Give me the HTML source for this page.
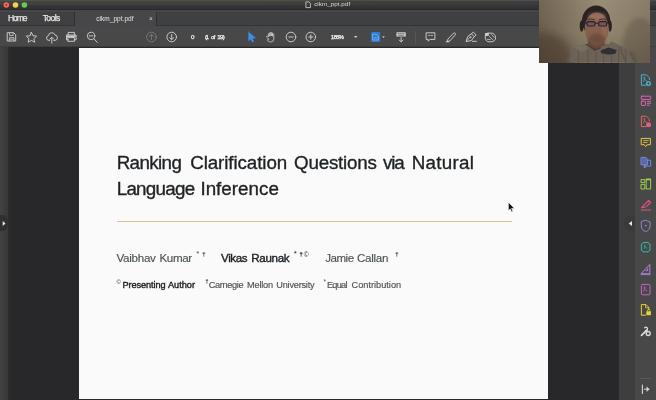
<!DOCTYPE html>
<html><head><meta charset="utf-8"><title>cikm_ppt.pdf</title>
<style>
html,body{margin:0;padding:0;background:#28272a;}
body{width:656px;height:400px;overflow:hidden;position:relative;font-family:"Liberation Sans",sans-serif;}
.abs{position:absolute;}
#titlebar{left:0;top:0;width:656px;height:10px;background:linear-gradient(90deg,rgba(90,110,50,0.13) 0,rgba(90,110,50,0.11) 40%,rgba(90,110,50,0) 58%) 0 0/656px 5px no-repeat,linear-gradient(#525251 0,#484847 1px,#3d3d3d 1.6px,#3b3b3b 5px,#343335 5.8px,#323133 8.5px,#272628 9.2px,#272628 10px);}
#tabbar{left:0;top:10px;width:656px;height:17px;background:#474749;}
#hometools{left:0;top:12px;width:74.5px;height:14px;background:#3f4042;border-right:1px solid #2f2f31;border-bottom:1px solid #343436;box-sizing:border-box;}
#tab{left:79px;top:10px;width:76px;height:17px;background:#474749;}
#tabrest{left:155.5px;top:12px;width:501px;height:14px;background:#3f4042;border-left:1px solid #2f2f31;border-bottom:1px solid #353537;box-sizing:border-box;}
#toolbar{left:0;top:27px;width:656px;height:20px;background:#484849;border-bottom:1px solid #3c3c3d;box-sizing:border-box;}
#content{left:0;top:47px;width:656px;height:353px;background:#28272a;}
#lstrip{left:0;top:47px;width:11px;height:353px;background:linear-gradient(90deg,#424242 0,#393939 7.5px,#2d2d2d 8.2px,#2a2a2a 11px);}
#lbtn{left:0;top:215px;width:8px;height:16px;background:#303030;border-radius:0 6px 6px 0;}
#page{left:79px;top:48px;width:469px;height:351px;background:#fafafa;}
#rstrip{left:619px;top:47px;width:16px;height:353px;background:#3e3e3e;}
#rbtn{left:624px;top:215px;width:11px;height:16px;background:#393939;border-radius:8px 0 0 8px;}
#rbar{left:635px;top:47px;width:21px;height:353px;background:#484848;}
#cam{left:539px;top:0;width:111px;height:63px;overflow:hidden;background:#8a7e6f;}
#rule{left:116.5px;top:220.6px;width:395px;height:1px;background:#e2bf8f;}
.w{position:absolute;white-space:nowrap;line-height:1;}
svg{position:absolute;left:0;top:0;}
</style></head><body>
<div class="abs" id="titlebar"></div>
<div class="abs" id="tabbar"></div>
<div class="abs" id="hometools"></div>
<div class="abs" id="tab"></div>
<div class="abs" id="tabrest"></div>
<div class="abs" id="toolbar"></div>
<div class="abs" id="content"></div>
<div class="abs" id="lstrip"></div>
<div class="abs" id="lbtn"></div>
<div class="abs" id="page"></div>
<div class="abs" id="rstrip"></div>
<div class="abs" id="rbtn"></div>
<div class="abs" id="rbar"></div>
<div class="abs" id="rule"></div>
<div id="pagetext" style="will-change:transform;position:absolute;left:0;top:0;width:656px;height:400px;">
<span class="w" style="left:116.70px;top:152.00px;font-size:18.8px;line-height:21px;color:#1e2225;-webkit-text-stroke:0.35px #1e2225;letter-spacing:-0.627px;">Ranking</span>
<span class="w" style="left:190.20px;top:152.00px;font-size:18.8px;line-height:21px;color:#1e2225;-webkit-text-stroke:0.35px #1e2225;letter-spacing:-0.089px;">Clarification</span>
<span class="w" style="left:294.10px;top:152.00px;font-size:18.8px;line-height:21px;color:#1e2225;-webkit-text-stroke:0.35px #1e2225;letter-spacing:-0.221px;">Questions</span>
<span class="w" style="left:383.00px;top:152.00px;font-size:18.8px;line-height:21px;color:#1e2225;-webkit-text-stroke:0.35px #1e2225;letter-spacing:-1.182px;">via</span>
<span class="w" style="left:411.80px;top:152.00px;font-size:18.8px;line-height:21px;color:#1e2225;-webkit-text-stroke:0.35px #1e2225;letter-spacing:0.255px;">Natural</span>
<span class="w" style="left:116.70px;top:178.00px;font-size:18.8px;line-height:21px;color:#1e2225;-webkit-text-stroke:0.35px #1e2225;letter-spacing:-0.731px;">Language</span>
<span class="w" style="left:200.40px;top:178.00px;font-size:18.8px;line-height:21px;color:#1e2225;-webkit-text-stroke:0.35px #1e2225;letter-spacing:0.017px;">Inference</span>
<span class="w" style="left:116.40px;top:252.00px;font-size:11.6px;line-height:12px;color:#4c5154;-webkit-text-stroke:0.15px #4c5154;letter-spacing:-0.257px;">Vaibhav</span>
<span class="w" style="left:159.50px;top:252.00px;font-size:11.6px;line-height:12px;color:#4c5154;-webkit-text-stroke:0.15px #4c5154;letter-spacing:-0.397px;">Kumar</span>
<span class="w" style="left:221.00px;top:252.00px;font-size:11.6px;line-height:12px;color:#1e2225;-webkit-text-stroke:0.4px #1e2225;letter-spacing:-0.386px;">Vikas</span>
<span class="w" style="left:251.20px;top:252.00px;font-size:11.6px;line-height:12px;color:#1e2225;-webkit-text-stroke:0.4px #1e2225;letter-spacing:-0.313px;">Raunak</span>
<span class="w" style="left:325.20px;top:252.00px;font-size:11.6px;line-height:12px;color:#4c5154;-webkit-text-stroke:0.15px #4c5154;letter-spacing:-0.495px;">Jamie</span>
<span class="w" style="left:357.00px;top:252.00px;font-size:11.6px;line-height:12px;color:#4c5154;-webkit-text-stroke:0.15px #4c5154;letter-spacing:-0.284px;">Callan</span>
<span class="w" style="left:122.60px;top:280.00px;font-size:9.2px;line-height:10px;color:#1e2225;-webkit-text-stroke:0.4px #1e2225;letter-spacing:-0.113px;">Presenting</span>
<span class="w" style="left:167.90px;top:280.00px;font-size:9.2px;line-height:10px;color:#1e2225;-webkit-text-stroke:0.4px #1e2225;letter-spacing:0.018px;">Author</span>
<span class="w" style="left:208.70px;top:280.00px;font-size:9.2px;line-height:10px;color:#4c5154;-webkit-text-stroke:0.15px #4c5154;letter-spacing:-0.325px;">Carnegie</span>
<span class="w" style="left:247.00px;top:280.00px;font-size:9.2px;line-height:10px;color:#4c5154;-webkit-text-stroke:0.15px #4c5154;letter-spacing:-0.191px;">Mellon</span>
<span class="w" style="left:276.30px;top:280.00px;font-size:9.2px;line-height:10px;color:#4c5154;-webkit-text-stroke:0.15px #4c5154;letter-spacing:-0.226px;">University</span>
<span class="w" style="left:326.90px;top:280.00px;font-size:9.2px;line-height:10px;color:#4c5154;-webkit-text-stroke:0.15px #4c5154;letter-spacing:-0.714px;">Equal</span>
<span class="w" style="left:351.60px;top:280.00px;font-size:9.2px;line-height:10px;color:#4c5154;-webkit-text-stroke:0.15px #4c5154;letter-spacing:-0.003px;">Contribution</span>
<span class="w" style="left:196.30px;top:249.00px;font-size:8px;line-height:9px;color:#4c5154;">*</span>
<span class="w" style="left:202.20px;top:251.00px;font-size:5.8px;line-height:6px;color:#4c5154;-webkit-text-stroke:0.25px #4c5154;">†</span>
<span class="w" style="left:293.80px;top:249.00px;font-size:8px;line-height:9px;color:#1e2225;">*</span>
<span class="w" style="left:299.60px;top:251.00px;font-size:5.8px;line-height:6px;color:#1e2225;-webkit-text-stroke:0.25px #1e2225;">†</span>
<span class="w" style="left:303.80px;top:251.00px;font-size:6.6px;line-height:7px;color:#1e2225;">©</span>
<span class="w" style="left:395.20px;top:251.00px;font-size:5.8px;line-height:6px;color:#4c5154;-webkit-text-stroke:0.25px #4c5154;">†</span>
<span class="w" style="left:116.60px;top:279.00px;font-size:5.8px;line-height:6px;color:#1e2225;">©</span>
<span class="w" style="left:205.50px;top:278.00px;font-size:5.2px;line-height:6px;color:#4c5154;-webkit-text-stroke:0.25px #4c5154;">†</span>
<span class="w" style="left:323.50px;top:278.00px;font-size:6.5px;line-height:7px;color:#4c5154;">*</span>
</div>
<div id="chrometext" style="will-change:transform;position:absolute;left:0;top:0;width:656px;height:400px;">
<span class="w" style="left:8.00px;top:13.00px;font-size:8.6px;line-height:10px;color:#e6e6e6;-webkit-text-stroke:0.25px #e6e6e6;letter-spacing:-1.115px;">Home</span>
<span class="w" style="left:42.70px;top:13.00px;font-size:8.6px;line-height:10px;color:#e6e6e6;-webkit-text-stroke:0.25px #e6e6e6;letter-spacing:-0.616px;">Tools</span>
<span class="w" style="left:96.20px;top:15.00px;font-size:6.5px;line-height:7px;color:#e4e4e4;letter-spacing:0.05px;">cikm_ppt.pdf</span>
<span class="w" style="left:148.90px;top:15.00px;font-size:6.5px;line-height:7px;color:#d8d8d8;">×</span>
<span class="w" style="left:314.20px;top:0.00px;font-size:6.2px;line-height:7px;color:#dcdcdc;letter-spacing:0.076px;">cikm_ppt.pdf</span>
<span class="w" style="left:190.90px;top:33.00px;font-size:6.2px;line-height:7px;color:#f2f2f2;-webkit-text-stroke:0.25px #f2f2f2;">0</span>
<span class="w" style="left:204.90px;top:33.00px;font-size:6.2px;line-height:7px;color:#f2f2f2;-webkit-text-stroke:0.25px #f2f2f2;letter-spacing:-1.56px;">(1</span>
<span class="w" style="left:211.00px;top:33.00px;font-size:6.2px;line-height:7px;color:#f2f2f2;-webkit-text-stroke:0.25px #f2f2f2;letter-spacing:-0.841px;">of</span>
<span class="w" style="left:217.20px;top:33.00px;font-size:6.2px;line-height:7px;color:#f2f2f2;-webkit-text-stroke:0.25px #f2f2f2;letter-spacing:-0.641px;">19)</span>
<span class="w" style="left:330.80px;top:33.00px;font-size:6.2px;line-height:7px;color:#f2f2f2;-webkit-text-stroke:0.25px #f2f2f2;letter-spacing:-0.841px;">186%</span>
</div>
<svg width="656" height="400" viewBox="0 0 656 400" fill="none" stroke-linecap="round" stroke-linejoin="round">
<!-- traffic lights -->
<g stroke="none">
<circle cx="6.300" cy="5" r="2.800" fill="#ef6a5b"/><circle cx="6.300" cy="5" r="0.900" fill="#b8281c"/>
<circle cx="15.500" cy="5" r="2.800" fill="#f1d14f"/>
<circle cx="24.400" cy="5" r="2.800" fill="#63cc52"/>
</g>
<!-- window title doc icon -->
<path d="M306.300 1.900h2.700l1.400 1.400v4.300h-4.100z" stroke="#d4d4d4" stroke-width="0.8"/>
<!-- main toolbar -->
<g stroke="#cfcfcf" stroke-width="0.95">
<!-- save -->
<path d="M7.6 32.7h6.1l2 2v6.3h-8.1z"/>
<path d="M9.6 32.9v2.6h3.6v-2.6M9.4 40.8v-3.2h4.5v3.2M10 39.2h3.2" stroke-width="0.8"/>
<!-- star -->
<path d="M31.4 32.4l1.55 3.3 3.6.45-2.65 2.5.7 3.55-3.2-1.75-3.2 1.75.7-3.55-2.65-2.5 3.6-.45z"/>
<!-- cloud upload -->
<path d="M49.6 40.4h-0.8a2.4 2.4 0 0 1-0.3-4.75a3.3 3.3 0 0 1 6.4-0.7a2.75 2.75 0 0 1 0.2 5.45h-1.3"/>
<path d="M51.8 43.2v-5.6M49.9 39.2l1.9-1.9 1.9 1.9"/>
<!-- printer -->
<path d="M68.2 35v-2.6h6.2v2.6M68.2 39.8h-1.7v-4.8h9.6v4.8h-1.7"/>
<path d="M68.2 37.6h6.2v3.7h-6.2z"/>
<path d="M67 35.6h8.6v1.6h-8.6z" fill="#cfcfcf" stroke="none"/>
<!-- magnifier -->
<circle cx="91.1" cy="35.9" r="3.7"/>
<path d="M93.9 38.7l3.4 3.7M89.4 35.9h3.4"/>
</g>
<!-- page up (dim) -->
<g stroke="#7d7d7d" stroke-width="0.9">
<circle cx="151.4" cy="37" r="4.8"/>
<path d="M151.4 39.6v-5M149.4 36.3l2-2 2 2"/>
</g>
<g stroke="#cfcfcf" stroke-width="0.95">
<circle cx="171.7" cy="37" r="4.8"/>
<path d="M171.7 34.4v5M169.7 37.7l2 2 2-2"/>
<!-- hand -->
<path d="M268.500 38.900l-1.700-1.800c-.6-.7.500-1.600 1.100-.9l.7.700v-3a.65.65 0 0 1 1.300 0v2.300-3.100a.65.65 0 0 1 1.300 0v2.900-2.700a.65.65 0 0 1 1.300 0v2.900-1.900a.65.65 0 0 1 1.300 0v4.300c0 2-1.200 3.300-3 3.300h-.6c-1.300 0-2.100-.7-2.800-1.700z" stroke-width="0.85"/>
<!-- zoom out -->
<circle cx="291" cy="37" r="4.8"/>
<path d="M288.8 37h4.4"/>
<!-- zoom in -->
<circle cx="310.8" cy="37" r="4.8"/>
<path d="M308.6 37h4.4M310.8 34.8v4.4"/>
</g>
<!-- select arrow -->
<path d="M248.6 31.9v9l2.2-2 1.5 3.3 1.5-0.7-1.5-3.2 3-0.2z" fill="#3d8fe8" stroke="#3d8fe8" stroke-width="0.4"/>
<!-- carets -->
<path d="M353.9 36.1h3.6l-1.8 2z" fill="#cfcfcf" stroke="none"/>
<path d="M382.2 36.3h2.6l-1.3 1.6z" fill="#cfcfcf" stroke="none"/>
<!-- fit page blue -->
<rect x="371.2" y="32" width="9" height="10" rx="0.8" fill="#2e7bd1" stroke="none"/>
<path d="M373 34.2h3.4l1.9 1.9v3.9h-5.3z M374.2 38.6l1.2-1.4 1 1 .9-.7" stroke="#8fc0f2" stroke-width="0.7"/>
<!-- keyboard/scroll -->
<rect x="396.4" y="32.2" width="9.4" height="4.4" rx="0.7" fill="#cfcfcf" stroke="none"/>
<path d="M398 33.6h0.6M399.8 33.6h0.6M401.6 33.6h0.6M403.4 33.6h0.6M398.6 35.2h5" stroke="#4a4a4a" stroke-width="0.7"/>
<path d="M401.1 37.6v4.2M399.2 40l1.9 1.9 1.9-1.9" stroke="#cfcfcf" stroke-width="0.95"/>
<!-- separator -->
<path d="M415.5 31.5v11.5" stroke="#5c5c5c" stroke-width="0.8"/>
<g stroke="#cfcfcf" stroke-width="0.95">
<!-- comment -->
<path d="M426.5 32.8h8.4v6.6h-5l-1.7 1.8v-1.8h-1.7z"/>
<path d="M428.6 35.4h1.2M431 35.4h1.6" stroke-width="0.8"/>
<!-- highlighter -->
<path d="M448.200 38.800l5.300-5.600c1-1 2.700.5 1.800 1.600l-5.100 5.800-2.700 1z"/>
<path d="M446.200 41.700h2.800" stroke-width="1.100"/>
<!-- sign pen -->
<path d="M466.200 41.200l1.500-4.700 3.700-2.700 2.800 2.800-2.700 3.700z"/>
<path d="M466.400 41l3.200-3.200" stroke-width="0.8"/>
<circle cx="470.300" cy="37.200" r="0.700" stroke-width="0.7"/>
<path d="M471.600 33.600l1.700-1.500 2.800 2.800-1.600 1.700M472.400 41.300h4"/>
<!-- stamp -->
<path d="M487.600 33.100h3.600c2.400 0 4.400 2 4.400 4.200v.6c0 2.300-2 3.900-4.400 3.900h-2c-2.300 0-3.900-1.600-3.900-3.900v-2.500"/>
<path d="M485.100 33h3.700v2.900h-3.700z" fill="#cfcfcf" stroke="none"/>
<path d="M491.400 34.600l3 3M489.500 36.500l3.200 3.200M487.200 39.400h3" stroke-width="0.8"/>
</g>
<!-- left/right panel arrows -->
<path d="M2.700 220.900v5l2.800-2.500z" fill="#e6e6e6" stroke="none"/>
<path d="M632 220.900v5l-3.300-2.500z" fill="#e6e6e6" stroke="none"/>
<!-- right tool pane icons -->
<g stroke-width="1">
<!-- 1 create pdf teal -->
<g stroke="#4fb0cf">
<path d="M646 85.200h-4.600v-10.400h5l3 3v1.800"/>
<path d="M643.400 81.600c.8-1.600 1.400-3 1.400-4.200c0-.8-1-.8-1 0c0 1.600 1.700 3.300 3.100 3.600" stroke-width="0.7"/>
<circle cx="648.500" cy="83.400" r="2.500" fill="#4fb0cf" stroke="none"/>
<path d="M647.400 83.400h2.200M648.500 82.300v2.200" stroke="#484848" stroke-width="0.7"/>
</g>
<!-- 2 organize pink -->
<g stroke="#d868ae">
<rect x="641.300" y="96.200" width="9.400" height="3.200" rx="0.500"/>
<rect x="641.300" y="101.200" width="4.200" height="4.200" rx="0.500"/>
<path d="M647.400 101.400h3.300M647.400 103.300h3.300M647.400 105.200h2"/>
</g>
<!-- 3 export pdf red -->
<g stroke="#e2665f">
<path d="M646 126.600h-4.600v-10.400h5l3 3v1.800"/>
<path d="M643.400 123c.8-1.600 1.400-3 1.400-4.200c0-.8-1-.8-1 0c0 1.600 1.700 3.300 3.100 3.600" stroke-width="0.7"/>
<circle cx="648.500" cy="124.800" r="2.500" fill="#e45c8e" stroke="none"/>
</g>
<!-- 4 comment yellow -->
<g stroke="#e9c93b">
<path d="M641.600 138.400h8.800v6.300h-3.300l-1.400 1.900-1.400-1.900h-2.700z"/>
<path d="M643.600 140.600h4.800M643.600 142.500h3.400" stroke-width="0.8"/>
</g>
<!-- 5 combine blue/purple -->
<g stroke="#6f86e8">
<path d="M641.400 157.400h4.400l1.800 1.800v5.600h-6.200z" fill="#6f86e8" fill-opacity="0.55"/>
<path d="M647.800 160.200h2.800v6h-4.400v-1.200"/>
<path d="M644.400 165.400v2.400l1.400-1" stroke="#b0a0f0" stroke-width="0.8"/>
</g>
<!-- 6 compress green -->
<g stroke="#9bd14a">
<rect x="641.400" y="179.600" width="3.400" height="3" />
<rect x="641.400" y="184.400" width="3.400" height="4.600" />
<rect x="646.600" y="179.600" width="4" height="9.400" />
<path d="M646.400 179.400h4" stroke-width="1.600"/>
</g>
<!-- 7 edit pink pen -->
<g stroke="#e0508a">
<path d="M641.600 207.600l7-7.200 2 2-3.600 3.600M641.600 207.600l4-.6M641.400 210h9.200" stroke-width="1.200"/>
</g>
<!-- 8 protect shield -->
<g stroke="#8d86d6">
<path d="M645.700 220.400l4.400 1.500v4c0 3-2 4.800-4.400 5.900c-2.400-1.100-4.400-2.900-4.400-5.900v-4z"/>
<circle cx="645.700" cy="225.700" r="0.600" fill="#8d86d6" stroke-width="0.5"/>
</g>
<!-- 9 teal enhance -->
<g stroke="#35b8a6">
<path d="M643.400 242.600h4.600M643.400 251.800h4.600M641.400 244.400v5.600M650 244.400v5.600"/>
<path d="M641.400 244.400l2-1.800M648 242.600l2 1.800M641.400 250l2 1.800M648 251.800l2-1.800"/>
<path d="M644.200 248.600c.6-1.200 1-2.200 1-3.200c0-.6-.8-.6-.8 0c0 1.300 1.400 2.600 2.600 2.800" stroke-width="0.7"/>
</g>
<!-- 10 measure purple -->
<g stroke="#b184e0">
<path d="M641.400 273.400l8.400-9v9z M646 270.600h1.600v-1.800"/>
<path d="M641 274.600h9.400" stroke-width="0.800"/>
</g>
<!-- 11 magenta doc -->
<g stroke="#c765c8">
<rect x="641.400" y="284.400" width="8.600" height="10.400" rx="1"/>
<path d="M643.600 291.400c.8-1.600 1.400-3 1.400-4.200c0-.8-1-.8-1 0c0 1.600 1.700 3.300 3.100 3.600" stroke-width="0.7"/>
</g>
<!-- 12 yellow doc lock -->
<g stroke="#e8d23c">
<path d="M645.400 315.200h-4v-10.600h4.600l2.800 2.800v2.400"/>
<path d="M645.600 304.800v3h3" stroke-width="0.8"/>
<rect x="646.300" y="311.300" width="4.600" height="3.900" fill="#e8d23c" stroke="none"/>
<path d="M647.400 311.300v-.9c0-1.500 2.400-1.500 2.400 0v.9" stroke-width="0.8"/>
</g>
<!-- 13 wrench tools -->
<g stroke="#dcdcdc">
<path d="M641.500 335.300l5-5" stroke-width="1.700"/>
<path d="M644.600 327.700c1.300-1.100 2.900-.3 2.900 1s-.8 2-2 2" stroke-width="1.300"/>
<circle cx="648.200" cy="333.500" r="2" stroke-width="1.300"/>
</g>
<!-- separator + collapse -->
<path d="M641 378.500h9.600" stroke="#5e5e5e" stroke-width="0.8"/>
<g stroke="#d8d8d8">
<path d="M642.400 385v8.400" stroke-width="1.100"/>
<path d="M644.400 389.200h4" stroke-width="1"/>
<path d="M647 387.200l2.300 2-2.300 2z" fill="#d8d8d8" stroke-width="0.5"/>
</g>
</g>
<!-- mouse cursor -->
<path d="M508.400 202.400v8.200l1.900-1.700 1.300 3 1.300-.6-1.300-2.900 2.600-.1z" fill="#111" stroke="#f4f4f4" stroke-width="0.6" stroke-linejoin="miter"/>
</svg>

<div class="abs" id="cam">
<svg width="111" height="63" viewBox="0 0 110 63" preserveAspectRatio="none">
<defs>
<linearGradient id="wall" x1="0" y1="0" x2="1" y2="0">
<stop offset="0" stop-color="#6d614f"/><stop offset="0.25" stop-color="#80745f"/><stop offset="0.55" stop-color="#968a73"/><stop offset="0.8" stop-color="#8d816b"/><stop offset="1" stop-color="#847965"/>
</linearGradient>
<linearGradient id="wallv" x1="0" y1="0" x2="0" y2="1">
<stop offset="0" stop-color="#fff" stop-opacity="0.03"/><stop offset="0.5" stop-color="#000" stop-opacity="0.02"/><stop offset="1" stop-color="#1a0f08" stop-opacity="0.18"/>
</linearGradient>
<filter id="b1" x="-30%" y="-30%" width="160%" height="160%"><feGaussianBlur stdDeviation="0.55"/></filter>
<filter id="b2" x="-30%" y="-30%" width="160%" height="160%"><feGaussianBlur stdDeviation="1.5"/></filter>
<filter id="b3" x="-40%" y="-40%" width="180%" height="180%"><feGaussianBlur stdDeviation="2.2"/></filter>
<filter id="b4" x="-50%" y="-50%" width="200%" height="200%"><feGaussianBlur stdDeviation="5"/></filter>
</defs>
<rect width="110" height="63" fill="url(#wall)"/>
<rect width="110" height="63" fill="url(#wallv)"/>
<!-- dark lower-left -->
<ellipse cx="2" cy="56" rx="30" ry="24" fill="#4a3a2d" opacity="0.62" filter="url(#b4)"/>
<!-- head shadow on right wall -->
<ellipse cx="100" cy="46" rx="17" ry="28" fill="#5a5040" opacity="0.4" filter="url(#b3)"/>
<!-- sweater -->
<path d="M28 62c0-3.500.4-6 1.600-9c1.200-2.800 3-4.800 5.400-6l10.500-3h24l2-2.500 16 7c4.500 2.200 7.500 5.400 9.500 9c.8 1.500 1.400 3 2 4.500z" fill="#6c6256" filter="url(#b1)"/>
<path d="M29.800 53v10M39 49v14M48.500 50v13M56.500 52v11M64 53v10M72 52v11M79 49v14M86 50v13" stroke="#554c44" stroke-width="0.9" fill="none" opacity="0.7" filter="url(#b1)"/>
<path d="M28 63c0-5 1-8 3.500-11M97 63c-1-4-3-8-6-11" stroke="#4e453d" stroke-width="2.400" fill="none" opacity="0.45" filter="url(#b2)"/>
<path d="M80 47l6 15M90 52l5 10" stroke="#574d46" stroke-width="1.800" fill="none" opacity="0.55" filter="url(#b1)"/>
<path d="M34 47.500l11-3 4 4-6 4z" fill="#7a7064" opacity="0.8" filter="url(#b1)"/>
<!-- collar shadows -->
<path d="M46 44l9 7 6-2.500v-5z" fill="#4a3d38" filter="url(#b1)"/>
<path d="M61 50.500l8-3 8 2.500-1.500 4-8 .500-6-1.500z" fill="#302f36" filter="url(#b1)"/>
<!-- hair / headphones -->
<ellipse cx="56.600" cy="21" rx="14" ry="15.400" fill="#2a2321" filter="url(#b1)"/>
<ellipse cx="42.300" cy="26" rx="2" ry="5.800" fill="#2a2321" filter="url(#b1)"/>
<ellipse cx="70.400" cy="26" rx="1.800" ry="5.800" fill="#2a2321" filter="url(#b1)"/>
<!-- neck -->
<path d="M48.500 38h16.500v7l-8 4-8.500-4z" fill="#694a3b" filter="url(#b1)"/>
<!-- face -->
<ellipse cx="57.200" cy="28.800" rx="11.900" ry="16.300" fill="#84604d" filter="url(#b1)"/>
<ellipse cx="57.200" cy="39.500" rx="8.500" ry="6" fill="#6a4a3a" opacity="0.8" filter="url(#b2)"/>
<ellipse cx="57.500" cy="16.500" rx="8.500" ry="3.600" fill="#9c7660" opacity="0.75" filter="url(#b2)"/>
<ellipse cx="65" cy="30" rx="3" ry="7" fill="#9a715b" opacity="0.5" filter="url(#b2)"/>
<!-- glasses -->
<path d="M45 23h3M66.800 23h3M55.300 23.300h4" stroke="#2b1f30" stroke-width="1.100" filter="url(#b1)"/>
<rect x="47.600" y="21.600" width="7.800" height="4.400" rx="1.200" fill="#6d4f5e" fill-opacity="0.7" stroke="#2b1f30" stroke-width="1.100" filter="url(#b1)"/>
<rect x="59.200" y="21.600" width="7.800" height="4.400" rx="1.200" fill="#6d4f5e" fill-opacity="0.7" stroke="#2b1f30" stroke-width="1.100" filter="url(#b1)"/>
<path d="M49.500 23.800h4M61 23.800h4" stroke="#3a2a33" stroke-width="1.200" opacity="0.8" filter="url(#b1)"/>
<path d="M48 19.800c2-1 4.500-1 7 0M59.500 19.800c2.500-1 5-1 7 0" stroke="#3a2922" stroke-width="1.100" fill="none" opacity="0.8" filter="url(#b1)"/>
<!-- nose / mouth -->
<path d="M57.300 27v5" stroke="#7a5545" stroke-width="1.600" opacity="0.6" filter="url(#b1)"/>
<path d="M53.500 36.300h7.500" stroke="#4a2f27" stroke-width="1.500" filter="url(#b1)"/>
</svg>

</div>
</body></html>
